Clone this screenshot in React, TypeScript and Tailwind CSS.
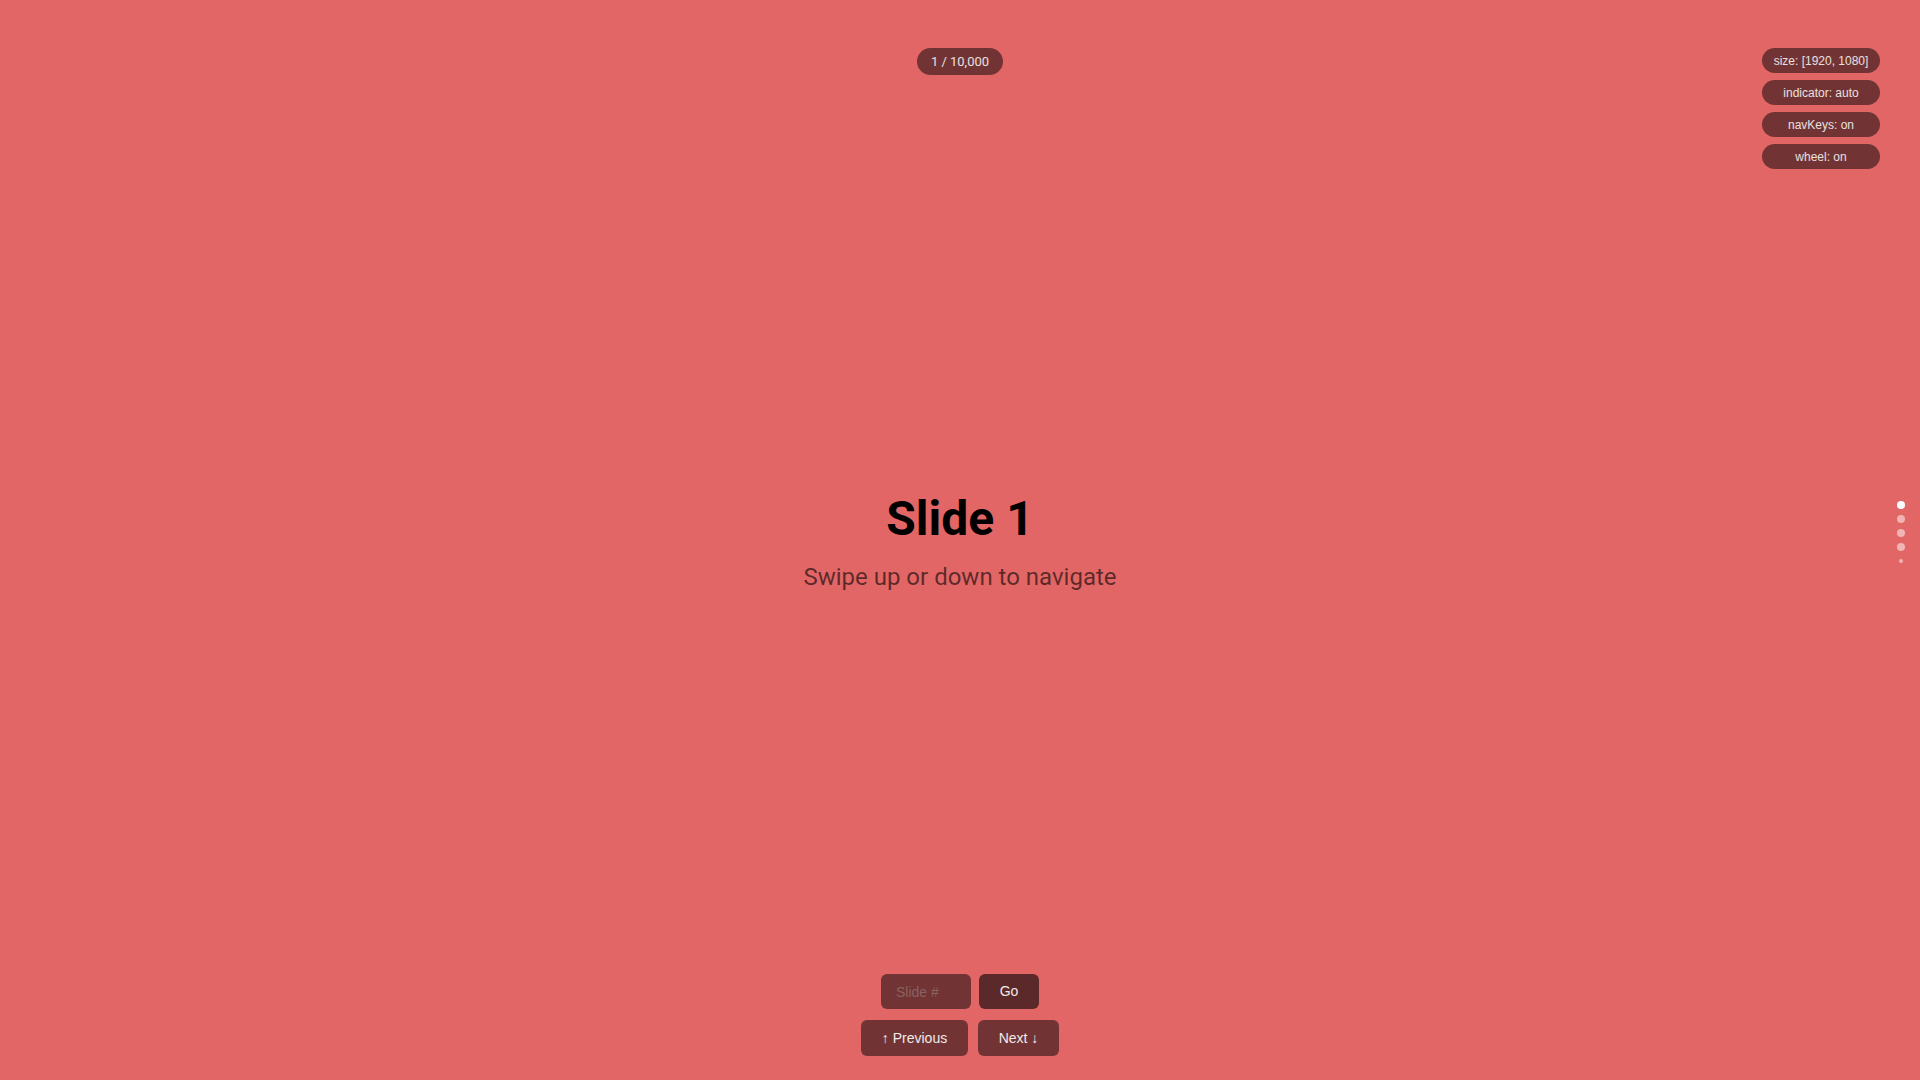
import React from "react";

export default function App() {
  const pills = ["size: [1920, 1080]", "indicator: auto", "navKeys: on", "wheel: on"];
  return (
    <div className="relative h-[1080px] w-[1920px] overflow-hidden bg-[#e36666]">
      {/* slide content */}
      <div className="flex h-full w-full flex-col items-center justify-center">
        <div className="mt-[8px] flex flex-col items-center" style={{ fontFamily: "Roboto, sans-serif" }}>
          <h1 className="mb-[18px] text-[48px] font-bold leading-[48px] text-black">Slide 1</h1>
          <p className="text-[24px] leading-[32px] text-black/60">Swipe up or down to navigate</p>
        </div>
      </div>

      {/* counter */}
      <div className="absolute left-0 right-0 top-[48px] flex justify-center">
        <div
          className="flex h-[27px] items-center rounded-full bg-black/50 px-[14px] text-[13px] text-white/85"
          style={{ fontFamily: "Roboto, sans-serif" }}
        >
          1 / 10,000
        </div>
      </div>

      {/* option pills */}
      <div
        className="absolute right-[40px] top-[48px] flex flex-col gap-[7px]"
        style={{ fontFamily: '"Liberation Sans", Arial, sans-serif' }}
      >
        {pills.map((p) => (
          <div
            key={p}
            className="flex h-[25px] w-[118px] items-center justify-center rounded-full bg-black/50 text-[12px] text-white/85"
          >
            {p}
          </div>
        ))}
      </div>

      {/* dots */}
      <div className="absolute right-[15px] top-[501px] flex w-[8px] flex-col items-center gap-[6px]">
        <div className="h-[8px] w-[8px] rounded-full bg-white" />
        <div className="h-[8px] w-[8px] rounded-full bg-white/50" />
        <div className="h-[8px] w-[8px] rounded-full bg-white/50" />
        <div className="h-[8px] w-[8px] rounded-full bg-white/50" />
        <div className="mt-[2px] h-[4px] w-[4px] rounded-full bg-white/50" />
      </div>

      {/* controls */}
      <div
        className="absolute bottom-[24px] left-0 right-0 flex flex-col items-center gap-[11px]"
        style={{ fontFamily: '"Liberation Sans", Arial, sans-serif' }}
      >
        <div className="flex items-center gap-[8px]">
          <input
            placeholder="Slide #"
            className="h-[35px] w-[90px] rounded-md bg-black/50 px-[15px] text-[14px] text-white/85 outline-none placeholder:text-[#8a6262]"
          />
          <button className="h-[35px] w-[60px] rounded-md bg-black/60 text-[14px] text-white/90">Go</button>
        </div>
        <div className="flex items-center gap-[10px]">
          <button className="h-[36px] w-[107px] rounded-md bg-black/50 text-[14px] text-white/90">↑ Previous</button>
          <button className="h-[36px] w-[81px] rounded-md bg-black/50 text-[14px] text-white/90">Next ↓</button>
        </div>
      </div>
    </div>
  );
}
